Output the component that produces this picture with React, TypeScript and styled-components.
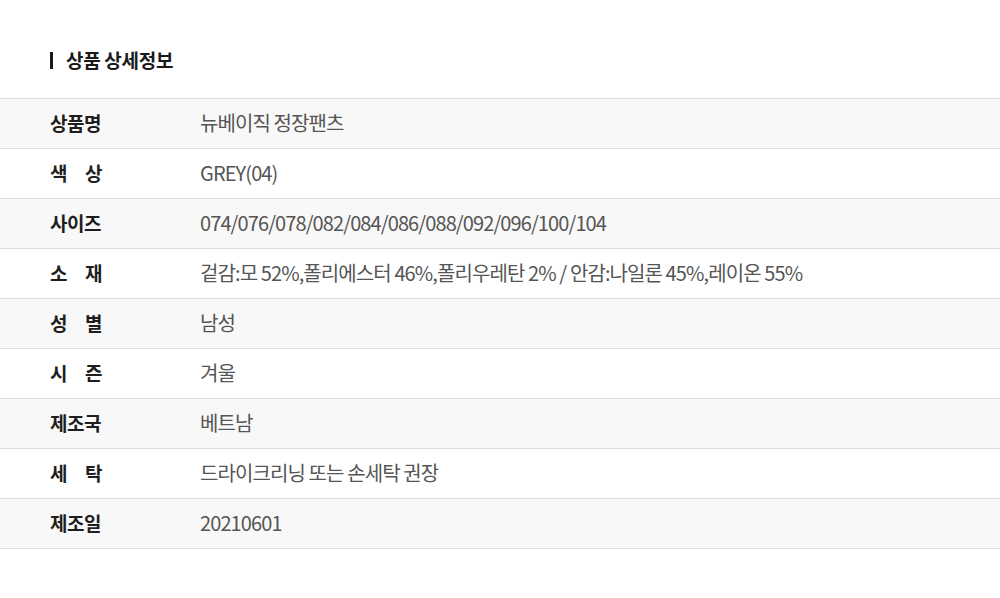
import styled, { createGlobalStyle } from "styled-components";

const GlobalStyle = createGlobalStyle`
  body {
    margin: 0;
    background: #fff;
    font-family: "Noto Sans CJK KR", "Noto Sans", sans-serif;
  }
`;

// labels with two syllables get spread across the column
const rows: { label: string; value: string; spaced?: boolean }[] = [
  { label: "상품명", value: "뉴베이직 정장팬츠" },
  { label: "색 상", value: "GREY(04)", spaced: true },
  { label: "사이즈", value: "074/076/078/082/084/086/088/092/096/100/104" },
  {
    label: "소 재",
    value: "겉감:모 52%,폴리에스터 46%,폴리우레탄 2% / 안감:나일론 45%,레이온 55%",
    spaced: true,
  },
  { label: "성 별", value: "남성", spaced: true },
  { label: "시 즌", value: "겨울", spaced: true },
  { label: "제조국", value: "베트남" },
  { label: "세 탁", value: "드라이크리닝 또는 손세탁 권장", spaced: true },
  { label: "제조일", value: "20210601" },
];

const App = () => {
  return (
    <Wrapper>
      <GlobalStyle />
      <Title>상품 상세정보</Title>
      <Table>
        {rows.map((row, i) => (
          <Row key={row.label} $striped={i % 2 === 0}>
            <Label $spaced={row.spaced}>{row.label}</Label>
            <Value>{row.value}</Value>
          </Row>
        ))}
      </Table>
    </Wrapper>
  );
};

export default App;

const Wrapper = styled.div`
  width: 1000px;
  height: 598px;
  padding-top: 46px;
  box-sizing: border-box;
`;
const Title = styled.h2`
  margin: 0 0 24px 50px;
  padding-left: 16px;
  position: relative;
  font-size: 19px;
  font-weight: 700;
  color: #1a1a1a;
  line-height: 28px;
  letter-spacing: -0.3px;
  &::before {
    content: "";
    position: absolute;
    left: 0;
    top: 6px;
    width: 3px;
    height: 17px;
    background: #1a1a1a;
  }
`;
const Table = styled.div`
  border-top: 1px solid #dcdcdc;
`;
const Row = styled.div<{ $striped: boolean }>`
  display: flex;
  align-items: center;
  height: 50px;
  box-sizing: border-box;
  padding: 0 0 3px 50px;
  border-bottom: 1px solid #dcdcdc;
  background: ${(p) => (p.$striped ? "#f8f8f8" : "#fff")};
`;
const Label = styled.div<{ $spaced?: boolean }>`
  width: 52px;
  margin-right: 98px;
  font-size: 19px;
  font-weight: 700;
  color: #1e1e1e;
  white-space: nowrap;
  text-align: ${(p) => (p.$spaced ? "justify" : "left")};
  text-align-last: ${(p) => (p.$spaced ? "justify" : "left")};
  letter-spacing: -0.5px;
`;
const Value = styled.div`
  font-size: 20px;
  font-weight: 400;
  color: #555;
  letter-spacing: -0.9px;
`;
